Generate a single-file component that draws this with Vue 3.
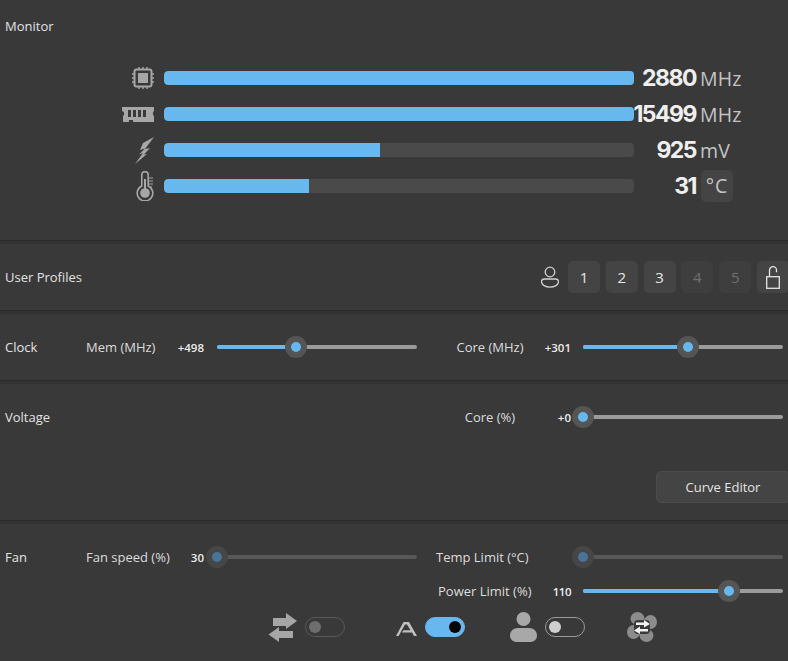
<script setup>
const metrics = [
  { id: 'cpu', pct: 100, value: '2880', unit: 'MHz' },
  { id: 'ram', pct: 100, value: '15499', unit: 'MHz' },
  { id: 'bolt', pct: 46, value: '925', unit: 'mV' },
  { id: 'temp', pct: 30.9, value: '31', unit: '°C', chip: true }
]
const profiles = [
  { n: 1, on: true }, { n: 2, on: true }, { n: 3, on: true }, { n: 4, on: false }, { n: 5, on: false }
]
</script>

<template>
  <div class="app">
    <section class="monitor">
      <div class="label mon-title">Monitor</div>
      <div class="metrics">
        <div v-for="m in metrics" :key="m.id" class="metric">
          <div class="m-icon">
            <svg v-if="m.id === 'cpu'" width="22" height="22" viewBox="0 0 22 22">
              <rect x="2.500" y="2.500" width="17" height="17" rx="2" fill="none" stroke="#a6a6a6" stroke-width="2"/>
              <rect x="6" y="6" width="10" height="10" fill="#a6a6a6"/>
              <path d="M7 0v3M11 0v3M15 0v3M7 19v3M11 19v3M15 19v3M0 7h3M0 11h3M0 15h3M19 7h3M19 11h3M19 15h3" stroke="#a6a6a6" stroke-width="1.400"/>
            </svg>
            <svg v-else-if="m.id === 'ram'" width="32" height="15" viewBox="0 0 32 15">
              <path fill="#a6a6a6" fill-rule="evenodd" d="M0 0h32v4l-1 1v3l1 1v6H11v-2H7v2H1V9l1-1V5L0 4zM6 3v7h3V3zm5 0v7h3V3zm5 0v7h3V3zm5 0v7h3V3z"/>
            </svg>
            <svg v-else-if="m.id === 'bolt'" width="19" height="27" viewBox="0 0 19 27">
              <path fill="#a6a6a6" d="M19 0 8 6 5 13l5-1.500-6 6 4-1.500L0 27l12-10-3 .5 6-6.500-5 1z"/>
            </svg>
            <svg v-else width="18" height="30" viewBox="0 0 18 30">
              <path fill="none" stroke="#a6a6a6" stroke-width="1.600" d="M5.800 15V3.800a3.200 3.200 0 0 1 6.400 0V15a7.800 7.800 0 1 1-6.400 0z"/>
              <circle cx="9" cy="22" r="4.800" fill="#a6a6a6"/>
              <rect x="8" y="8" width="2" height="12" fill="#a6a6a6"/>
              <path d="M13 7h4M13 10h4M13 13h4M13 16h3" stroke="#a6a6a6" stroke-width="1.200"/>
            </svg>
          </div>
          <div class="bar"><div class="fill" :style="{ width: m.pct + '%' }"></div></div>
          <div class="m-value">{{ m.value }}</div>
          <div class="m-unit" :class="{ chip: m.chip }">{{ m.unit }}</div>
        </div>
      </div>
    </section>
    <div class="sep"></div>

    <section class="row-section profiles">
      <div class="label">User Profiles</div>
      <div class="p-list">
        <svg class="p-user" width="18" height="22" viewBox="0 0 18 22">
          <circle cx="9" cy="6" r="4.800" fill="none" stroke="#cfcfcf" stroke-width="1.300"/>
          <path d="M3.500 13h11c2 0 3 1 3 2.500 0 3.500-4 5.700-8.500 5.700S.5 19 .5 15.500C.5 14 1.500 13 3.500 13z" fill="none" stroke="#cfcfcf" stroke-width="1.300"/>
        </svg>
        <div v-for="p in profiles" :key="p.n" class="p-btn" :class="{ off: !p.on }">{{ p.n }}</div>
        <div class="p-btn">
          <svg width="14" height="23" viewBox="0 0 14 23">
            <rect x="0.700" y="10.700" width="12.600" height="11.600" fill="none" stroke="#e4e4e4" stroke-width="1.300"/>
            <path d="M3.500 10.500V4.200a3.500 3.500 0 0 1 7 0v2" fill="none" stroke="#e4e4e4" stroke-width="1.300"/>
          </svg>
        </div>
      </div>
    </section>
    <div class="sep"></div>

    <section class="row-section sliders">
      <div class="label">Clock</div>
      <div class="group left">
        <span class="s-label">Mem (MHz)</span><span class="s-val">+498</span>
        <div class="slider"><div class="s-fill" :style="{ width: '39.5%' }"></div><div class="thumb" :style="{ left: '39.5%' }"></div></div>
      </div>
      <div class="group right">
        <span class="s-label center">Core (MHz)</span><span class="s-val">+301</span>
        <div class="slider"><div class="s-fill" :style="{ width: '52.5%' }"></div><div class="thumb" :style="{ left: '52.5%' }"></div></div>
      </div>
    </section>
    <div class="sep"></div>

    <section class="voltage">
      <div class="row-section sliders">
        <div class="label">Voltage</div>
        <div></div>
        <div class="group right">
          <span class="s-label center">Core (%)</span><span class="s-val">+0</span>
          <div class="slider"><div class="thumb" :style="{ left: '0%' }"></div></div>
        </div>
      </div>
      <div class="curve-wrap"><div class="curve">Curve Editor</div></div>
    </section>
    <div class="sep"></div>

    <section class="fan">
      <div class="row-section sliders">
        <div class="label">Fan</div>
        <div class="group left">
          <span class="s-label">Fan speed (%)</span><span class="s-val">30</span>
          <div class="slider dim"><div class="thumb" :style="{ left: '0%' }"></div></div>
        </div>
        <div class="group right">
          <span class="s-label">Temp Limit (°C)</span><span class="s-val"></span>
          <div class="slider dim"><div class="thumb" :style="{ left: '0%' }"></div></div>
        </div>
      </div>
      <div class="row-section sliders power">
        <div></div>
        <div></div>
        <div class="group right">
          <span class="s-label pl">Power Limit (%)</span><span class="s-val tight">110</span>
          <div class="slider"><div class="s-fill" :style="{ width: '73%' }"></div><div class="thumb" :style="{ left: '73%' }"></div></div>
        </div>
      </div>
      <div class="controls">
        <svg class="c-swap" width="29" height="29" viewBox="0 0 29 29">
          <path fill="#a6a6a6" d="M5 5h13V0l11 8-11 8v-3H5zM25 18H11v-4L.5 21.500 11 29v-4h14z"/>
        </svg>
        <div class="switch off"><i></i></div>
        <svg class="c-a" width="21" height="14" viewBox="0 0 21 14">
          <path fill="#c0c0c0" d="M7.500 0h5.500L21 14h-3l-2-3.400H5.800l1.800-2.400h7l-3.600-5.600h-2L2.600 14H0z"/>
        </svg>
        <div class="switch on"><i></i></div>
        <svg class="c-user" width="27" height="30" viewBox="0 0 27 30">
          <circle cx="13.500" cy="7" r="7" fill="#a8a8a8"/>
          <path fill="#a8a8a8" d="M8 16h11c4.500 0 8 3 8 7.500 0 4-3 6.500-7 6.500H7c-4 0-7-2.500-7-6.500C0 19 3.500 16 8 16z"/>
        </svg>
        <div class="switch light"><i></i></div>
        <svg class="c-fan" width="30" height="30" viewBox="0 0 30 30">
          <g fill="#8c8c8c">
            <ellipse cx="10.500" cy="6.500" rx="7" ry="6.500"/>
            <ellipse cx="23.500" cy="10" rx="6.500" ry="7"/>
            <ellipse cx="19.500" cy="23.500" rx="7" ry="6.500"/>
            <ellipse cx="6.500" cy="20" rx="6.500" ry="7"/>
          </g>
          <rect x="7" y="8" width="16" height="14" rx="4" fill="#3a3a3a"/>
          <path fill="#f2f2f2" d="M9 10.500h8V8l6 4-6 3.500V13H9zM21 17h-8v-2.500L7 18.500l6 3.500v-2.500h8z"/>
        </svg>
      </div>
    </section>
  </div>
</template>

<style scoped>
.app {
  width: 788px;
  height: 661px;
  overflow: hidden;
  background: #393939;
  font-family: "Open Sans", "Noto Sans", sans-serif;
  color: #dcdcdc;
  font-size: 13px;
}
.label { color: #e2e2e2; }
.sep {
  height: 4px;
  background: #323232;
  border-top: 1px solid #2b2b2b;
  box-sizing: border-box;
}
.monitor { height: 240px; padding: 17px 5px 0; box-sizing: border-box; }
.mon-title { height: 18px; line-height: 18px; }
.metrics { margin: 25px 0 0 -5px; }
.metric {
  display: grid;
  grid-template-columns: 154px 480px 62px auto;
  height: 36px;
  align-items: center;
}
.m-icon { display: flex; justify-content: flex-end; align-items: center; height: 36px; }
.bar {
  margin-left: 10px;
  width: 470px;
  height: 14px;
  border-radius: 4px;
  background: #4a4a4a;
  overflow: hidden;
}
.fill { height: 100%; background: #68b8f0; border-radius: 4px 0 0 4px; }
.m-value {
  font-family: Inter, sans-serif;
  font-weight: 700;
  font-size: 23px;
  letter-spacing: -1.500px;
  color: #efefef;
  white-space: nowrap;
  justify-self: end;
}
.m-unit { font-size: 19.500px; color: #c4c4c4; margin-left: 4px; letter-spacing: 0.200px; }
.m-unit.chip {
  width: 32px;
  height: 32px;
  line-height: 32px;
  text-align: center;
  background: #444;
  border-radius: 5px;
  letter-spacing: 1px;
  margin-left: 5px;
}
.row-section { height: 66px; display: flex; align-items: center; padding: 0 5px; box-sizing: border-box; }
.profiles { justify-content: space-between; }
.p-list { display: flex; align-items: center; gap: 5.800px; margin-right: -6px; }
.p-user { margin-right: 3px; }
.p-btn {
  width: 32px;
  height: 32px;
  border-radius: 5px;
  background: #444;
  color: #e6e6e6;
  font-size: 15px;
  display: flex;
  align-items: center;
  justify-content: center;
}
.p-btn.off { background: #3e3e3e; color: #707070; }
.sliders {
  display: grid;
  grid-template-columns: 81px 350px 347px;
  align-items: center;
  padding: 0 0 0 5px;
}
.group { display: grid; align-items: center; height: 22px; }
.group.left { grid-template-columns: 90px 28px 213px; }
.group.left .slider { margin-left: 13px; }
.group.right { grid-template-columns: 108px 27px 212px; }
.group.right .slider { margin-left: 12px; }
.s-label { white-space: nowrap; color: #dcdcdc; }
.s-label.center { text-align: center; }
.s-label.pl { padding-left: 2px; }
.s-val { text-align: right; font-size: 11.500px; font-weight: 600; color: #ececec; white-space: nowrap; }
.s-val.tight { letter-spacing: -0.500px; }
.slider { position: relative; height: 4px; width: 200px; background: #9b9b9b; border-radius: 2px; }
.s-fill { height: 100%; background: #68b8f0; border-radius: 2px 0 0 2px; }
.thumb {
  position: absolute;
  top: 50%;
  width: 10px;
  height: 10px;
  margin: -11px 0 0 -11px;
  border: 6px solid #555;
  border-radius: 50%;
  background: #68b8f0;
}
.slider.dim { background: #585858; }
.slider.dim .thumb { background: #4a7496; border-color: #464646; }
.voltage { height: 136px; }
.curve-wrap { margin-top: 21px; display: flex; justify-content: flex-end; margin-right: -2px; }
.curve {
  width: 134px;
  height: 32px;
  line-height: 30px;
  box-sizing: border-box;
  text-align: center;
  background: #444;
  border: 1px solid #4c4c4c;
  border-radius: 5px;
  color: #e4e4e4;
  font-size: 13px;
}
.fan { height: 137px; }
.power { height: 34px; margin-top: -16px; }
.controls { display: flex; align-items: center; height: 30px; margin-top: 4px; padding-left: 268px; }
.c-swap { margin-right: 8px; }
.c-a { margin: 3px 8px 0 51px; }
.c-user { margin: 0 8px 0 45px; }
.c-fan { margin-left: 42px; }
.switch {
  width: 40px;
  height: 20px;
  box-sizing: border-box;
  border-radius: 10px;
  border: 1.500px solid #5a5a5a;
  display: flex;
  align-items: center;
  padding: 0 3px;
}
.switch i { display: block; width: 12px; height: 12px; border-radius: 50%; background: #6e6e6e; }
.switch.on { background: #68b8f0; border-color: #68b8f0; justify-content: flex-end; }
.switch.on i { background: #050505; }
.switch.light { border-color: #9a9a9a; }
.switch.light i { background: #cfcfcf; }
</style>
